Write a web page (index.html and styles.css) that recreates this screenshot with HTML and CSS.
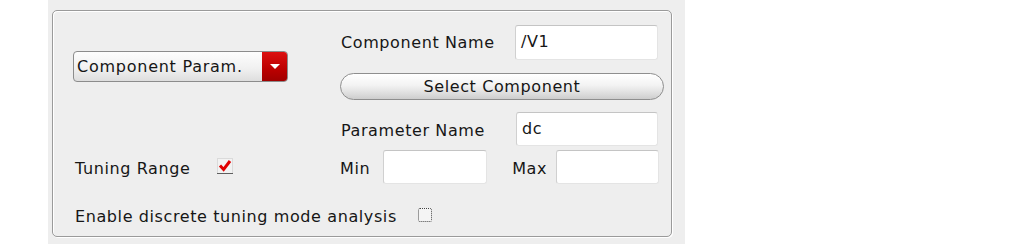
FILE: index.html
```html
<!DOCTYPE html>
<html lang="en">
<head>
  <meta charset="UTF-8">
  <title>Tuning Parameter</title>
  <link rel="stylesheet" href="styles.css">
</head>
<body>
  <div class="panel">
    <div class="frame">
      <div class="grid">
        <div class="left-top">
          <div class="dropdown">
            <span class="dropdown-text">Component Param.</span>
            <span class="dropdown-arrow"></span>
          </div>
        </div>

        <div class="right-top">
          <div class="field-row">
            <span class="label">Component Name</span>
            <div class="input wide">/V1</div>
          </div>
          <div class="button">Select Component</div>
          <div class="field-row param">
            <span class="label">Parameter Name</span>
            <div class="input wide">dc</div>
          </div>
        </div>

        <div class="left-range">
          <span class="label">Tuning Range</span>
          <span class="check checked">
            <svg width="16" height="16" viewBox="0 0 16 16">
              <rect x="0.5" y="0.5" width="15" height="15" fill="#f2f2f2" stroke="#dadada"/>
              <line x1="0" y1="15.5" x2="16" y2="15.5" stroke="#5e5e5e"/>
              <path d="M3 7.5 L6.6 11.5 L13 3" fill="none" stroke="#e00000" stroke-width="3"/>
            </svg>
          </span>
        </div>

        <div class="right-range">
          <span class="label">Min</span>
          <div class="input small min"></div>
          <span class="label max">Max</span>
          <div class="input small max-input"></div>
        </div>

        <div class="discrete">
          <span class="label">Enable discrete tuning mode analysis</span>
          <span class="check empty"></span>
        </div>
      </div>
    </div>
  </div>
</body>
</html>
```

FILE: styles.css
```css
body {
  margin: 0;
  background-color: #ffffff;
  font-family: "DejaVu Sans", sans-serif;
  font-size: 16px;
  letter-spacing: 0.6px;
  color: #161616;
}

.panel {
  margin-left: 48px;
  width: 637px;
  height: 244px;
  box-sizing: border-box;
  padding: 10px 13px 7px 4px;
  background-color: #eeeeee;
}

.frame {
  height: 100%;
  box-sizing: border-box;
  border: 1px solid #9a9a9a;
  border-radius: 5px;
  box-shadow: inset 1px 1px 0 #ffffff, 1px 1px 0 #ffffff;
  padding: 14px 0 0 20px;
}

.grid {
  display: grid;
  grid-template-columns: 267px 324px;
  grid-template-rows: auto auto auto;
}

.left-top {
  display: flex;
  align-items: flex-start;
  padding-top: 26px;
}

.dropdown {
  display: flex;
  width: 213px;
  height: 29px;
  border: 1px solid #8c8c8c;
  border-radius: 4px;
  overflow: hidden;
  background: linear-gradient(#fdfdfd, #f1f1f1 55%, #dedede);
}

.dropdown-text {
  flex: 1;
  padding-left: 3px;
  line-height: 29px;
  letter-spacing: 0.75px;
}

.dropdown-arrow {
  position: relative;
  width: 25px;
  background: linear-gradient(#dc1010, #bb0000 60%, #a00000);
}

.dropdown-arrow::after {
  content: "";
  position: absolute;
  left: 8px;
  top: 12px;
  border-left: 5px solid transparent;
  border-right: 5px solid transparent;
  border-top: 5px solid #ffffff;
}

.right-top {
  display: flex;
  flex-direction: column;
}

.field-row {
  display: flex;
  align-items: center;
  justify-content: space-between;
  padding-left: 1px;
  padding-right: 6px;
}

.field-row.param {
  margin-top: 12px;
}

.field-row.param .label {
  padding-top: 2px;
}

.input {
  box-sizing: border-box;
  background-color: #ffffff;
  border: 1px solid #e4e4e4;
  border-top-color: #c4c4c4;
  border-left-color: #d0d0d0;
  border-radius: 3px;
  padding-left: 5px;
  line-height: 32px;
}

.input.wide {
  width: 143px;
  height: 35px;
}

.field-row.param .input.wide {
  width: 142px;
  height: 34px;
}

.input.small {
  width: 104px;
  height: 34px;
}

.button {
  margin-top: 13px;
  height: 27px;
  box-sizing: border-box;
  border: 1px solid #8e8e8e;
  border-radius: 14px;
  background: linear-gradient(#ffffff, #f3f3f3 45%, #dcdcdc 80%, #cdcdcd);
  text-align: center;
  line-height: 25px;
}

.left-range {
  display: flex;
  align-items: center;
  padding-left: 2px;
  padding-top: 6px;
}

.check.checked {
  display: flex;
  margin-left: 27px;
  margin-top: -5px;
}

.right-range {
  display: flex;
  align-items: center;
  margin-top: 4px;
}

.right-range .label {
  padding-top: 3px;
}

.right-range .input.min {
  margin-left: 13px;
}

.right-range .max {
  margin-left: 25px;
}

.right-range .input.max-input {
  width: 103px;
  margin-left: 9px;
}

.discrete {
  grid-column: 1 / span 2;
  display: flex;
  align-items: center;
  margin-top: 22px;
  padding-left: 2px;
  height: 20px;
}

.check.empty {
  width: 14px;
  height: 14px;
  margin-left: 21px;
  margin-top: -3px;
  box-sizing: border-box;
  border: 1px dotted #444444;
  border-radius: 2px;
  background-color: #f4f4f4;
}
```
